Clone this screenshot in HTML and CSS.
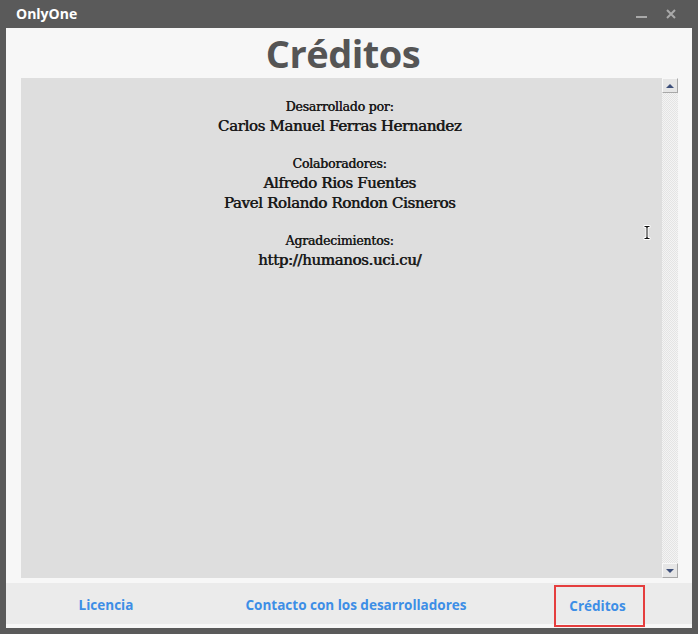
FILE: index.html
```html
<!DOCTYPE html>
<html lang="es">
<head>
<meta charset="utf-8">
<title>OnlyOne</title>
<link rel="stylesheet" href="styles.css">
</head>
<body>
<div class="window">
  <div class="titlebar">
    <span class="app-name">OnlyOne</span>
    <div class="controls">
      <svg class="ctl" width="11" height="10" viewBox="0 0 11 10"><rect x="0" y="7" width="11" height="2" fill="#a9a9a9"/></svg>
      <svg class="ctl" width="10" height="10" viewBox="0 0 10 10"><path d="M1 1L9 9M9 1L1 9" stroke="#a9a9a9" stroke-width="2"/></svg>
    </div>
  </div>
  <div class="client">
    <h1 class="heading">Créditos</h1>
    <div class="textbox">
      <div class="text">
        <div class="label">Desarrollado por:</div>
        <div class="name">Carlos Manuel Ferras Hernandez</div>
        <div class="spacer"></div>
        <div class="label">Colaboradores:</div>
        <div class="name">Alfredo Rios Fuentes</div>
        <div class="name">Pavel Rolando Rondon Cisneros</div>
        <div class="spacer"></div>
        <div class="label">Agradecimientos:</div>
        <div class="name">http://humanos.uci.cu/</div>
        <svg class="ibeam" width="8" height="17" viewBox="0 0 8 17"><path d="M1 1.5H7V3.5H5V13.5H7V15.5H1V13.5H3V3.5H1Z" fill="#111" stroke="#fff" stroke-width="1"/></svg>
      </div>
      <div class="scrollbar">
        <div class="sb-btn"><span class="arrow up"></span></div>
        <div class="sb-track"></div>
        <div class="sb-btn"><span class="arrow down"></span></div>
      </div>
    </div>
    <div class="buttons">
      <button class="btn">Licencia</button>
      <button class="btn">Contacto con los desarrolladores</button>
      <button class="btn active">Créditos</button>
    </div>
  </div>
</div>
</body>
</html>
```
FILE: styles.css
```css
* { box-sizing: border-box; }
html, body { margin: 0; padding: 0; }
body {
  width: 698px;
  height: 634px;
  background: #5a5a5a;
  overflow: hidden;
}
.window {
  display: flex;
  flex-direction: column;
  height: 634px;
  padding: 0 6px 6px 6px;
}
.titlebar {
  height: 28px;
  display: flex;
  align-items: center;
  justify-content: space-between;
  padding: 0 0 0 10px;
}
.app-name {
  font-family: "Open Sans", sans-serif;
  font-weight: 700;
  font-size: 14px;
  color: #ffffff;
  margin-top: -1px;
}
.controls {
  display: flex;
  gap: 19px;
  padding-right: 16px;
  align-items: center;
}
.ctl { display: block; }
.client {
  flex: 1;
  background: #f7f7f7;
  display: flex;
  flex-direction: column;
  padding: 0 0 4px 0;
}
.heading {
  margin: 0;
  height: 50px;
  padding-right: 12px;
  text-align: center;
  font-family: "Open Sans", sans-serif;
  font-weight: 700;
  font-size: 38px;
  line-height: 50px;
  color: #555555;
  letter-spacing: -0.5px;
}
.textbox {
  display: flex;
  height: 500px;
  margin: 0 14px 0 15px;
}
.text {
  position: relative;
  flex: 1;
  background: #dedede;
  padding: 20px 4px 0 0;
  text-align: center;
  font-family: "DejaVu Serif", serif;
  color: #1a1a1a;
}
.label {
  font-size: 12.5px;
  line-height: 18px;
  font-weight: 400;
  letter-spacing: -0.2px;
  text-shadow: 0.4px 0 0 #1a1a1a;
}
.name {
  font-size: 15px;
  line-height: 20px;
  letter-spacing: -0.35px;
  text-shadow: 0.6px 0 0 #1a1a1a;
}
.spacer { height: 19px; }
.ibeam {
  position: absolute;
  left: 622px;
  top: 146px;
}
.scrollbar {
  width: 16px;
  display: flex;
  flex-direction: column;
}
.sb-track {
  flex: 1;
  background-color: #f4f4f4;
  background-image:
    linear-gradient(45deg, #e4e4e4 25%, transparent 25%, transparent 75%, #e4e4e4 75%),
    linear-gradient(45deg, #e4e4e4 25%, transparent 25%, transparent 75%, #e4e4e4 75%);
  background-size: 2px 2px;
  background-position: 0 0, 1px 1px;
}
.sb-btn {
  height: 15px;
  background: #e6e6e6;
  border: 1px solid #f8f8f8;
  border-right-color: #a8a8a8;
  border-bottom-color: #a8a8a8;
  display: flex;
  align-items: center;
  justify-content: center;
}
.arrow {
  width: 0; height: 0;
  border-left: 4px solid transparent;
  border-right: 4px solid transparent;
}
.arrow.up { border-bottom: 4px solid #3d4f7a; }
.arrow.down { border-top: 4px solid #3d4f7a; }
.buttons {
  margin-top: 5px;
  height: 41px;
  background: #ebebeb;
  display: flex;
  align-items: stretch;
}
.btn {
  background: transparent;
  border: 2px solid transparent;
  font-family: "Open Sans", sans-serif;
  font-weight: 700;
  font-size: 13.5px;
  color: #3d8ee6;
  padding: 2px 0 0 0;
  cursor: pointer;
}
.btn:nth-child(1) { width: 200px; }
.btn:nth-child(2) { width: 300px; }
.btn.active {
  width: 91px;
  margin-left: 48px;
  margin-top: 2px;
  margin-bottom: -3px;
  padding: 0 4px 0 0;
  border-color: #e53e3e;
}
```
